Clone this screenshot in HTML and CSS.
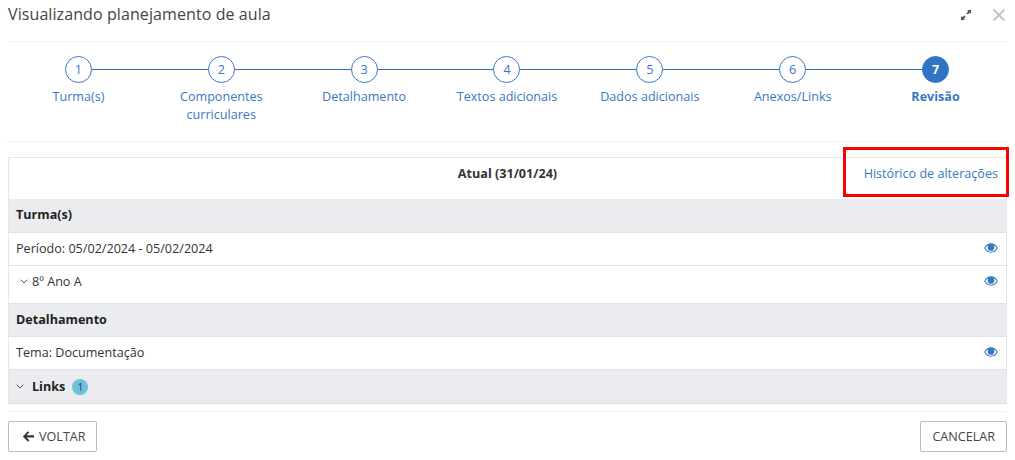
FILE: index.html
```html
<!DOCTYPE html>
<html lang="pt-BR">
<head>
<meta charset="utf-8">
<title>Visualizando planejamento de aula</title>
<link rel="stylesheet" href="styles.css">
</head>
<body>
<svg class="defs" width="0" height="0" aria-hidden="true">
  <symbol id="eye" viewBox="0 0 14 10">
    <path fill="currentColor" fill-rule="evenodd" d="M7 .3C4 .3 1.6 2.2.2 5c1.4 2.8 3.8 4.7 6.8 4.7s5.4-1.9 6.8-4.7C12.400 2.200 10 .3 7 .3zM1.300 5C2.200 3.600 3.200 2.600 4.400 1.900 3.900 2.600 3.600 3.400 3.600 4.400c0 1.900 1.500 3.400 3.400 3.400s3.400-1.500 3.400-3.400c0-1-.3-1.800-.8-2.500C10.800 2.600 11.800 3.600 12.700 5 11.300 7.300 9.300 8.700 7 8.700S2.700 7.300 1.300 5z"/>
  </symbol>
</svg>
<div class="modal">
  <header class="head">
    <h1 class="title">Visualizando planejamento de aula</h1>
    <div class="head-tools">
      <svg class="expand" viewBox="0 0 12 12" width="12" height="12"><path fill="#555" d="M7 1h4v4L9.700 3.700 7.800 5.600 6.400 4.200 8.300 2.300zM5 11H1V7l1.300 1.300 1.900-1.900 1.400 1.400-1.900 1.900z"/></svg>
      <svg class="close" viewBox="0 0 14 14" width="14" height="14"><path stroke="#c4c4c4" stroke-width="2" fill="none" d="M1.500 1.500l11 11M12.500 1.500l-11 11"/></svg>
    </div>
  </header>
  <ol class="steps">
    <li class="step"><span class="dot">1</span><span class="label">Turma(s)</span></li>
    <li class="step"><span class="dot">2</span><span class="label">Componentes curriculares</span></li>
    <li class="step"><span class="dot">3</span><span class="label">Detalhamento</span></li>
    <li class="step"><span class="dot">4</span><span class="label">Textos adicionais</span></li>
    <li class="step"><span class="dot">5</span><span class="label">Dados adicionais</span></li>
    <li class="step"><span class="dot">6</span><span class="label">Anexos/Links</span></li>
    <li class="step current"><span class="dot">7</span><span class="label">Revisão</span></li>
  </ol>
  <section class="panel">
    <div class="panel-top">
      <strong class="current-title">Atual (31/01/24)</strong>
      <a class="history" href="#">Histórico de alterações</a>
      <span class="marker"></span>
    </div>
    <div class="row section">Turma(s)</div>
    <div class="row"><span>Período: 05/02/2024 - 05/02/2024</span><svg class="eye"><use href="#eye"/></svg></div>
    <div class="row tall"><span class="with-chev"><svg class="chev" viewBox="0 0 8 5" width="8" height="5"><path d="M.7.7L4 4 7.300.7" fill="none" stroke="#555" stroke-width="1"/></svg>8º Ano A</span><svg class="eye"><use href="#eye"/></svg></div>
    <div class="row section">Detalhamento</div>
    <div class="row"><span>Tema: Documentação</span><svg class="eye"><use href="#eye"/></svg></div>
    <div class="row section links">
      <span class="with-chev wide"><svg class="chev" viewBox="0 0 8 5" width="8" height="5"><path d="M.7.7L4 4 7.300.7" fill="none" stroke="#7a4a2a" stroke-width="1"/></svg>Links<span class="badge">1</span></span>
    </div>
  </section>
  <footer class="foot">
    <button class="btn back" type="button"><svg class="arrow" viewBox="0 0 12 11" width="12" height="11"><path fill="#333" d="M6 .3l1.300 1.300-2.700 2.700H12v2.200H4.600l2.700 2.700L6 10.700.8 5.500z"/></svg>VOLTAR</button>
    <button class="btn" type="button">CANCELAR</button>
  </footer>
</div>
</body>
</html>
```
FILE: styles.css
```css
* { box-sizing: border-box; }
html, body { margin: 0; padding: 0; background: #fff; }
body {
  font-family: "Open Sans", "Liberation Sans", sans-serif;
  font-size: 12.600px;
  color: #333;
  width: 1015px;
  height: 460px;
  overflow: hidden;
}
.defs { position: absolute; }
.modal { padding: 0 8px; }
.head {
  height: 42px;
  display: flex;
  justify-content: space-between;
  align-items: flex-start;
  border-bottom: 1px solid #f2f2f2;
}
.title {
  margin: 3px 0 0;
  font-size: 16px;
  line-height: 22px;
  font-weight: 400;
  color: #444;
  letter-spacing: .09px;
}
.head-tools { display: flex; align-items: center; gap: 20px; padding: 8px 1px 0 0; }
.steps {
  list-style: none;
  margin: 0 0 0 -1px;
  padding: 14px 0 0;
  height: 100px;
  display: grid;
  grid-template-columns: repeat(7, 1fr);
  border-bottom: 1px solid #f2f2f2;
  width: 1000px;
}
.step {
  position: relative;
  display: flex;
  flex-direction: column;
  align-items: center;
  text-align: center;
  color: #3a77c2;
}
.step:not(:last-child)::after {
  content: "";
  position: absolute;
  left: 50%;
  width: 100%;
  top: 13px;
  border-top: 1px solid #2f6db5;
}
.dot {
  position: relative;
  z-index: 1;
  width: 27px;
  height: 27px;
  border: 1px solid #3a77c2;
  border-radius: 50%;
  background: #fff;
  display: flex;
  align-items: center;
  justify-content: center;
}
.label { margin-top: 5px; line-height: 18px; width: 110px; }
.current .dot { background: #3075c4; color: #fff; font-weight: 700; }
.current .label { font-weight: 700; }
.panel {
  margin-top: 15px;
  border: 1px solid #e7e7ea;
  border-bottom-color: #dcdde0;
}
.panel-top {
  position: relative;
  height: 41px;
  display: flex;
  justify-content: center;
  padding-top: 7px;
  line-height: 18px;
}
.current-title { font-weight: 700; color: #333; height: 18px; }
.history {
  position: absolute;
  right: 8px;
  top: 7px;
  color: #3a77c2;
  text-decoration: none;
  line-height: 18px;
}
.marker {
  position: absolute;
  left: 834px;
  top: -11px;
  width: 166px;
  height: 50px;
  border: 3px solid #f00;
}
.row {
  height: 33px;
  padding: 0 7px 2px;
  border-top: 1px solid #e2e3e6;
  display: flex;
  align-items: center;
  justify-content: space-between;
}
.panel-top + .row { border-top-color: #ebecf0; padding-bottom: 4px; }
.row.tall { height: 38px; padding-bottom: 7px; }
.row.links { height: 34px; padding-bottom: 0; }
.section { background: #ebecf0; font-weight: 700; color: #222; }
.with-chev { display: flex; align-items: center; }
.chev { margin: 0 4px 0 4px; }
.wide .chev { margin: 0 8px 0 0; }
.badge {
  width: 16px;
  height: 16px;
  margin-left: 7px;
  border-radius: 50%;
  background: #6cc1dc;
  font-weight: 400;
  font-size: 11px;
  color: #2a4a6a;
  display: flex;
  align-items: center;
  justify-content: center;
}
.eye { width: 14px; height: 10px; color: #3a77c2; margin-right: 1px; }
.foot {
  margin-top: 7px;
  padding-top: 9px;
  border-top: 1px solid #f2f2f2;
  display: flex;
  justify-content: space-between;
}
.btn {
  height: 31px;
  padding: 0 11px;
  background: #fff;
  border: 1px solid #bbb;
  border-radius: 2px;
  font: 400 12.600px "Open Sans", "Liberation Sans", sans-serif;
  color: #444;
  display: flex;
  align-items: center;
}
.back { padding: 0 10px 0 13px; }
.arrow { margin-right: 5px; }
```
